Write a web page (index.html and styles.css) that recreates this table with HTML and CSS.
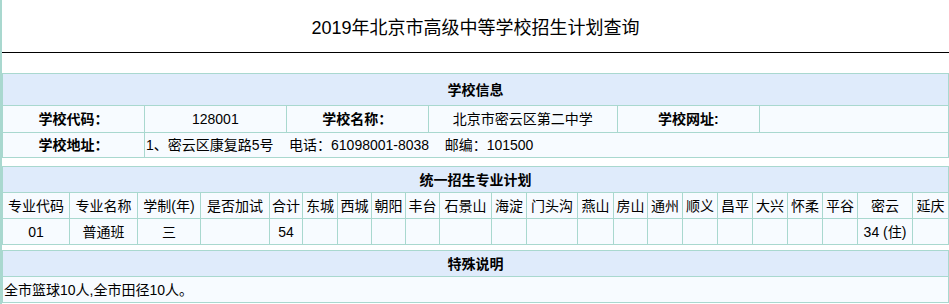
FILE: index.html
```html
<!DOCTYPE html>
<html>
	<head>
		<meta charset="utf-8">
		<title>2019年北京市高级中等学校招生计划查询</title>
		<link rel="stylesheet" href="styles.css">
	</head>
	<body>
		<div class="page">
			<h1 class="title">2019年北京市高级中等学校招生计划查询</h1>

			<!-- 学校信息 -->
			<table class="grid info">
				<colgroup>
					<col class="w15">
					<col class="w15">
					<col class="w15">
					<col class="w20">
					<col class="w15">
					<col class="w20">
				</colgroup>
				<tr class="head">
					<th colspan="6" class="head-tall">学校信息</th>
				</tr>
				<tr class="row-first">
					<td class="label">学校代码：</td>
					<td>128001</td>
					<td class="label">学校名称：</td>
					<td>北京市密云区第二中学</td>
					<td class="label">学校网址:</td>
					<td></td>
				</tr>
				<tr class="row-last">
					<td class="label">学校地址：</td>
					<td colspan="5" class="left">1、密云区康复路5号&nbsp;&nbsp;&nbsp;&nbsp;电话：61098001-8038&nbsp;&nbsp;&nbsp;&nbsp;邮编：101500</td>
				</tr>
			</table>

			<!-- 统一招生专业计划 -->
			<table class="grid plan">
				<colgroup>
					<col class="c-code">
					<col class="c-name">
					<col class="c-years">
					<col class="c-exam">
					<col class="c-total">
					<col class="c-two">
					<col class="c-two-s">
					<col class="c-two-s">
					<col class="c-two-s">
					<col class="c-three">
					<col class="c-two">
					<col class="c-three-s">
					<col class="c-two-l">
					<col class="c-two-s">
					<col class="c-two">
					<col class="c-two">
					<col class="c-two">
					<col class="c-two">
					<col class="c-two">
					<col class="c-two">
					<col class="c-miyun">
					<col class="c-two-l">
				</colgroup>
				<tr class="head">
					<th colspan="22">统一招生专业计划</th>
				</tr>
				<tr>
					<td>专业代码</td>
					<td>专业名称</td>
					<td>学制(年)</td>
					<td>是否加试</td>
					<td>合计</td>
					<td>东城</td>
					<td>西城</td>
					<td>朝阳</td>
					<td>丰台</td>
					<td>石景山</td>
					<td>海淀</td>
					<td>门头沟</td>
					<td>燕山</td>
					<td>房山</td>
					<td>通州</td>
					<td>顺义</td>
					<td>昌平</td>
					<td>大兴</td>
					<td>怀柔</td>
					<td>平谷</td>
					<td>密云</td>
					<td>延庆</td>
				</tr>
				<tr>
					<td>01</td>
					<td>普通班</td>
					<td>三</td>
					<td></td>
					<td>54</td>
					<td></td>
					<td></td>
					<td></td>
					<td></td>
					<td></td>
					<td></td>
					<td></td>
					<td></td>
					<td></td>
					<td></td>
					<td></td>
					<td></td>
					<td></td>
					<td></td>
					<td></td>
					<td>34 (住)</td>
					<td></td>
				</tr>
			</table>

			<!-- 特殊说明 -->
			<table class="grid note">
				<tr class="head">
					<th>特殊说明</th>
				</tr>
				<tr>
					<td class="left">全市篮球10人,全市田径10人。</td>
				</tr>
			</table>
		</div>
	</body>
</html>
```

FILE: styles.css
```css
* {
	margin: 0;
	padding: 0;
}

body {
	font-family: "Liberation Sans", "Noto Sans CJK SC", sans-serif;
	font-size: 14px;
	color: #000000;
	background-color: #ffffff;
}

.page {
	border-left: 2px solid #a9d8cf;
	min-height: 304px;
}

.title {
	height: 53px;
	padding-top: 3px;
	box-sizing: border-box;
	line-height: 50px;
	font-size: 18px;
	font-weight: normal;
	text-align: center;
	border-bottom: 1px solid #000000;
}

.grid {
	width: 100%;
	border-collapse: collapse;
	border: 1px solid #a9d8cf;
	table-layout: fixed;
}

.grid th,
.grid td {
	border: 1px solid #a9d8cf;
	background-color: #f7fbff;
	height: 25px;
	padding: 0 1px;
	text-align: center;
	white-space: nowrap;
	overflow: hidden;
	line-height: 20px;
}

.grid .head th {
	background-color: #dfebfb;
	font-weight: bold;
}

.grid .head-tall {
	height: 31px;
}

.grid .left {
	text-align: left;
}

.grid .label {
	font-weight: bold;
}

/* 学校信息 */
.info {
	margin-top: 20px;
}

.info .w15 {
	width: 15%;
}

.info .w20 {
	width: 20%;
}

.info .row-first td {
	height: 26px;
}

.info .row-last td {
	height: 24px;
}

/* 统一招生专业计划 */
.plan {
	margin-top: 8px;
}

.plan .c-code { width: 67px; }
.plan .c-name { width: 68px; }
.plan .c-years { width: 63px; }
.plan .c-exam { width: 69px; }
.plan .c-total { width: 33px; }
.plan .c-two { width: 35px; }
.plan .c-two-s { width: 34px; }
.plan .c-two-l { width: 36px; }
.plan .c-three { width: 52px; }
.plan .c-three-s { width: 51px; }
.plan .c-miyun { width: 55px; }

/* 特殊说明 */
.note {
	margin-top: 5px;
}
```
